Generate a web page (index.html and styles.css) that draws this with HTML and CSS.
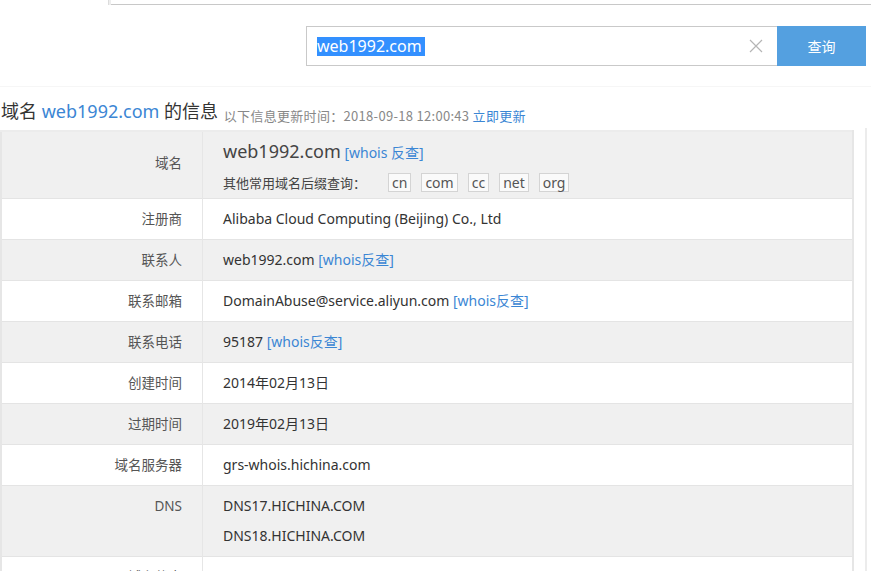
FILE: index.html
```html
<!DOCTYPE html>
<html lang="zh-CN">
<head>
<meta charset="utf-8">
<title>域名信息</title>
<link rel="stylesheet" href="styles.css">
</head>
<body>
<div class="tabs">
  <div class="tab-active"></div>
  <div class="tab-rest"></div>
</div>
<div class="search">
  <div class="search-input">
    <span class="sel">web1992.com</span>
    <svg class="clear" width="14" height="14" viewBox="0 0 14 14"><path d="M1 1L13 13M13 1L1 13" stroke="#b5b5b5" stroke-width="1.2" fill="none"/></svg>
  </div>
  <button class="search-btn">查询</button>
</div>
<div class="divider"></div>
<div class="layout">
  <div class="main">
    <h1 class="title">域名 <span class="blue">web1992.com</span> 的信息 <small class="sub">以下信息更新时间：2018-09-18 12:00:43 <a class="link">立即更新</a></small></h1>
    <table class="info">
      <tr class="gray first">
        <th class="lab lab-first">域名</th>
        <td class="val">
          <div class="dom-line"><span class="big">web1992.com</span> <a class="link">[whois 反查]</a></div>
          <div class="suffix-line">其他常用域名后缀查询：<span class="tags"><span class="tag">cn</span><span class="tag">com</span><span class="tag">cc</span><span class="tag">net</span><span class="tag">org</span></span></div>
        </td>
      </tr>
      <tr><th class="lab">注册商</th><td class="val">Alibaba Cloud Computing (Beijing) Co., Ltd</td></tr>
      <tr class="gray"><th class="lab">联系人</th><td class="val">web1992.com <a class="link">[whois反查]</a></td></tr>
      <tr><th class="lab">联系邮箱</th><td class="val">DomainAbuse@service.aliyun.com <a class="link">[whois反查]</a></td></tr>
      <tr class="gray"><th class="lab">联系电话</th><td class="val">95187 <a class="link">[whois反查]</a></td></tr>
      <tr><th class="lab">创建时间</th><td class="val">2014年02月13日</td></tr>
      <tr class="gray"><th class="lab">过期时间</th><td class="val">2019年02月13日</td></tr>
      <tr><th class="lab">域名服务器</th><td class="val">grs-whois.hichina.com</td></tr>
      <tr class="gray"><th class="lab lab-top">DNS</th><td class="val">DNS17.HICHINA.COM<br>DNS18.HICHINA.COM</td></tr>
      <tr><th class="lab">域名状态</th><td class="val">clientTransferProhibited</td></tr>
    </table>
  </div>
  <div class="side"></div>
</div>
</body>
</html>
```
FILE: styles.css
```css
html, body {
  margin: 0;
  padding: 0;
  background: #fff;
  font-family: "Noto Sans", "Noto Sans CJK SC", sans-serif;
  color: #333;
  overflow: hidden;
}
.tabs {
  display: flex;
  height: 5px;
}
.tab-active {
  width: 108px;
  border-right: 1px solid #dcdcdc;
  box-shadow: 2px 0 0 #eee;
}
.tab-rest {
  flex: 1;
  border-bottom: 1px solid #c8c8c8;
  margin-left: 2px;
}
.search {
  display: flex;
  justify-content: flex-end;
  padding-right: 5px;
  margin-top: 21px;
}
.search-input {
  height: 38px;
  border: 1px solid #c9c9c9;
  border-right: none;
  display: flex;
  align-items: center;
  justify-content: space-between;
  padding-left: 10px;
  padding-right: 14px;
  box-sizing: content-box;
  width: 446px;
}
.sel {
  background: #3390ff;
  color: #fff;
  font-size: 16px;
  line-height: 19px;
  padding-right: 3px;
}
.clear {
  display: block;
}
.search-btn {
  width: 89px;
  height: 40px;
  border: none;
  background: #54a0e0;
  color: #fff;
  font-family: "Noto Sans CJK SC", sans-serif;
  font-size: 14px;
  padding: 0;
}
.divider {
  margin-top: 20px;
  height: 1px;
  background: #f6f6f6;
}
.layout {
  display: flex;
}
.main {
  width: 855px;
}
.side {
  flex: 1;
  margin-left: 10px;
  margin-top: 41px;
  border-left: 2px solid #ececec;
  height: 500px;
}
.title {
  margin: 12px 0 0 1px;
  font-weight: normal;
  font-size: 18px;
  line-height: 24px;
  height: 31px;
  color: #333;
  font-family: "Noto Sans", "Noto Sans CJK SC", sans-serif;
  white-space: nowrap;
}
.blue {
  color: #3b86d4;
}
.sub {
  font-family: "Noto Sans CJK SC", sans-serif;
  font-size: 13px;
  color: #888;
  margin-left: 1px;
  letter-spacing: 0.3px;
  vertical-align: -3px;
}
.link {
  color: #3b86d4;
  text-decoration: none;
}
.info {
  width: 854px;
  border-collapse: collapse;
  border-left: 2px solid #e6e6e6;
  border-right: 2px solid #e6e6e6;
  border-top: 2px solid #ececec;
}
.info tr {
  background: #fff;
  border-bottom: 1px solid #e4e4e4;
}
.info tr.gray {
  background: #f0f0f0;
}
.lab {
  width: 180px;
  padding: 5px 20px 5px 0;
  text-align: right;
  font-weight: normal;
  font-size: 13.5px;
  line-height: 30px;
  color: #555;
  border-right: 1px solid #e6e6e6;
  vertical-align: middle;
}
.lab-first {
  padding-bottom: 9px;
}
.lab-top {
  vertical-align: top;
}
.val {
  padding: 5px 0 5px 20px;
  font-size: 14px;
  line-height: 30px;
  color: #333;
  vertical-align: top;
}
.first .val {
  padding-top: 6px;
  padding-bottom: 2px;
}
.dom-line {
  line-height: 26px;
}
.big {
  font-size: 18px;
  color: #444;
}
.suffix-line {
  margin-top: 4px;
  line-height: 26px;
  font-size: 13px;
  color: #444;
  font-family: "Noto Sans CJK SC", sans-serif;
}
.tags {
  margin-left: 22px;
  font-family: "Noto Sans", sans-serif;
}
.tag {
  display: inline-block;
  border: 1px solid #d4d4d4;
  background: #fafafa;
  padding: 0 3px;
  line-height: 17px;
  margin-right: 10px;
  font-size: 14px;
  color: #555;
}
```
